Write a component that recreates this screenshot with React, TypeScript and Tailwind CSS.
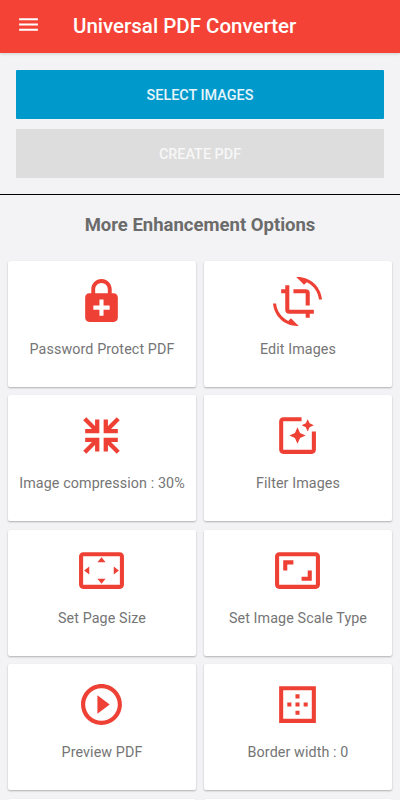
import type { ComponentType } from 'react';
import {
  MdAspectRatio,
  MdBorderOuter,
  MdCropRotate,
  MdEnhancedEncryption,
  MdMenu,
  MdPhotoFilter,
  MdPlayCircleOutline,
  MdSettingsOverscan,
} from 'react-icons/md';

interface Option {
  label: string;
  icon: ComponentType<{ className?: string }>;
}

// Four arrows pointing at the center
function CompressIcon({ className }: { className?: string }) {
  return (
    <svg viewBox="-12 -12 24 24" fill="none" stroke="currentColor" strokeWidth="2.1" className={className}>
      <path d="M-8 -2.1H-2.1V-7.8M-8.2 -8.2L-2.1 -2.1" />
      <path d="M8 -2.1H2.1V-7.8M8.2 -8.2L2.1 -2.1" />
      <path d="M-8 2.1H-2.1V7.8M-8.2 8.2L-2.1 2.1" />
      <path d="M8 2.1H2.1V7.8M8.2 8.2L2.1 2.1" />
    </svg>
  );
}

const options: Option[] = [
  { label: 'Password Protect PDF', icon: MdEnhancedEncryption },
  { label: 'Edit Images', icon: MdCropRotate },
  { label: 'Image compression : 30%', icon: CompressIcon },
  { label: 'Filter Images', icon: MdPhotoFilter },
  { label: 'Set Page Size', icon: MdSettingsOverscan },
  { label: 'Set Image Scale Type', icon: MdAspectRatio },
  { label: 'Preview PDF', icon: MdPlayCircleOutline },
  { label: 'Border width : 0', icon: MdBorderOuter },
];

function OptionCard({ label, icon: Icon }: Option) {
  return (
    <button className="flex h-[126px] flex-col items-center rounded-[2px] bg-white pt-4 shadow-[0_1px_2px_rgba(0,0,0,0.28)]">
      <Icon className="mr-px size-[49px] shrink-0 text-[#ee4035]" />
      <span className="mt-3 whitespace-nowrap text-[14.3px] leading-[22px] tracking-[0.1px] text-[#757575]">
        {label}
      </span>
    </button>
  );
}

export default function App() {
  return (
    <div className="h-[800px] w-[400px] overflow-hidden bg-[#f3f3f5] font-['Roboto',sans-serif]">
      <header className="flex h-[53px] items-center bg-[#f44336] text-white shadow-[0_1px_3px_rgba(0,0,0,0.15)]">
        <button className="ml-4 -mt-1" aria-label="Menu">
          <MdMenu className="size-[25px]" />
        </button>
        <h1 className="-mt-0.5 ml-8 text-[20.5px] font-medium leading-6">Universal PDF Converter</h1>
      </header>

      <div className="flex flex-col gap-2.5 border-b border-black px-4 pb-4 pt-[17px]">
        <button className="h-[49px] rounded-[1px] bg-[#0099cc] pt-0.5 text-[14.4px] font-medium text-white/90">
          SELECT IMAGES
        </button>
        <button className="h-[49px] rounded-[1px] bg-[#dddddd] pt-0.5 text-[14.4px] font-medium text-[#f7f7f7]" disabled>
          CREATE PDF
        </button>
      </div>

      <h2 className="pt-[18px] text-center text-[18.5px] font-bold leading-6 text-[#6b6b6b]">
        More Enhancement Options
      </h2>

      <div className="mt-6 grid grid-cols-2 gap-x-2 gap-y-[8.4px] px-2">
        {options.map((option) => (
          <OptionCard key={option.label} {...option} />
        ))}
        <div className="h-[126px] rounded-[2px] bg-white shadow-[0_1px_2px_rgba(0,0,0,0.28)]" />
        <div className="h-[126px] rounded-[2px] bg-white shadow-[0_1px_2px_rgba(0,0,0,0.28)]" />
      </div>
    </div>
  );
}
